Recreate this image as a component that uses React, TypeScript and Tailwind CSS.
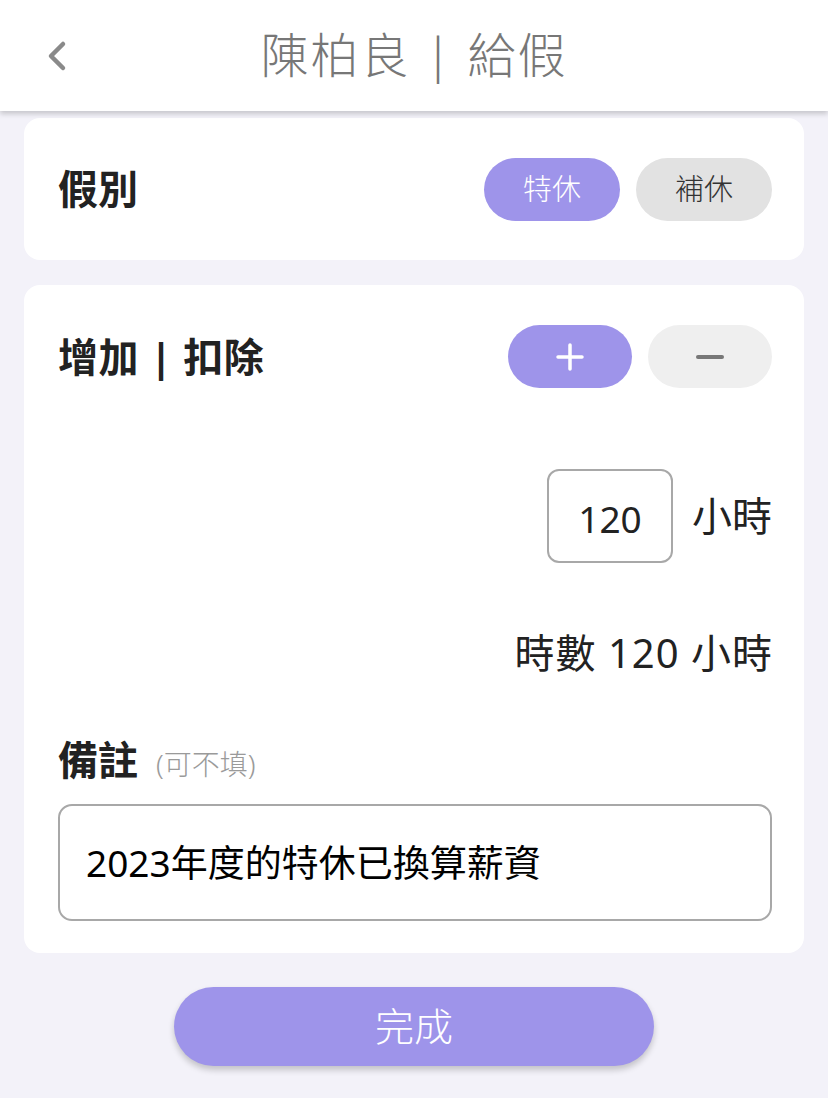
import React from "react";

const font = { fontFamily: '"Noto Sans", "Noto Sans CJK TC", sans-serif' };

export default function App() {
  return (
    <div className="w-[828px] h-[1098px] bg-[#f3f2f9] flex flex-col overflow-hidden" style={font}>
      <header className="relative h-[111px] bg-white shadow-[0_3px_5px_rgba(0,0,0,0.18)] flex items-center justify-center z-10 shrink-0">
        <svg className="absolute left-[44px] top-[40px]" width="26" height="32" viewBox="0 0 26 32">
          <path d="M19 4 L7 16 L19 28" fill="none" stroke="#8a8a8a" strokeWidth="4.5" strokeLinecap="round" strokeLinejoin="round" />
        </svg>
        <h1 className="text-[48px] leading-none text-[#777777] font-light tracking-[2px] mt-[-2px]">陳柏良 | 給假</h1>
      </header>

      <div className="px-[24px] pt-[7px] flex flex-col">
        <section className="bg-white rounded-[16px] h-[142px] pl-[34px] pr-[32px] flex items-center justify-between">
          <span className="text-[40px] font-bold text-[#222222]">假別</span>
          <div className="flex gap-[16px]">
            <button className="w-[136px] h-[63px] rounded-full bg-[#9e94ea] text-white text-[29px] font-light">特休</button>
            <button className="w-[136px] h-[63px] rounded-full bg-[#e2e2e2] text-[#333333] text-[29px] font-light">補休</button>
          </div>
        </section>

        <section className="mt-[25px] bg-white rounded-[16px] h-[668px] pl-[34px] pr-[32px] pt-[40px] flex flex-col">
          <div className="flex items-center justify-between">
            <span className="text-[40px] font-bold text-[#222222] whitespace-pre tracking-[0.5px]">增加 | 扣除</span>
            <div className="flex gap-[16px]">
              <button className="w-[124px] h-[63px] rounded-full bg-[#9e94ea] flex items-center justify-center">
                <svg width="30" height="30" viewBox="0 0 30 30">
                  <path d="M15 3 V27 M3 15 H27" stroke="white" strokeWidth="3.5" strokeLinecap="round" />
                </svg>
              </button>
              <button className="w-[124px] h-[63px] rounded-full bg-[#efefef] flex items-center justify-center">
                <svg width="30" height="30" viewBox="0 0 30 30">
                  <path d="M3 15 H27" stroke="#777777" strokeWidth="4" strokeLinecap="round" />
                </svg>
              </button>
            </div>
          </div>

          <div className="mt-[81px] flex items-center justify-end gap-[19px]">
            <div className="w-[126px] h-[94px] border-2 border-[#a8a8a8] rounded-[12px] flex items-center justify-center text-[37px] text-[#222222] pt-[6px]">120</div>
            <span className="text-[40px] text-[#222222]">小時</span>
          </div>

          <div className="mt-[70px] text-right text-[40px] text-[#222222] leading-none whitespace-pre tracking-[1px] mr-[-1px]">時數 120 小時</div>

          <div className="mt-[57px] flex items-baseline gap-[18px]">
            <span className="text-[40px] font-bold text-[#222222]">備註</span>
            <span className="text-[28px] text-[#9a9a9a] font-light">(可不填)</span>
          </div>

          <div className="mt-[14px] h-[117px] border-2 border-[#a8a8a8] rounded-[14px] flex items-center px-[26px] text-[37px] text-black">
            2023年度的特休已換算薪資
          </div>
        </section>

        <div className="mt-[34px] flex justify-center">
          <button className="w-[480px] h-[79px] rounded-full bg-[#9e94ea] text-white text-[39px] font-light shadow-[0_4px_6px_rgba(0,0,0,0.2)]">完成</button>
        </div>
      </div>
    </div>
  );
}
